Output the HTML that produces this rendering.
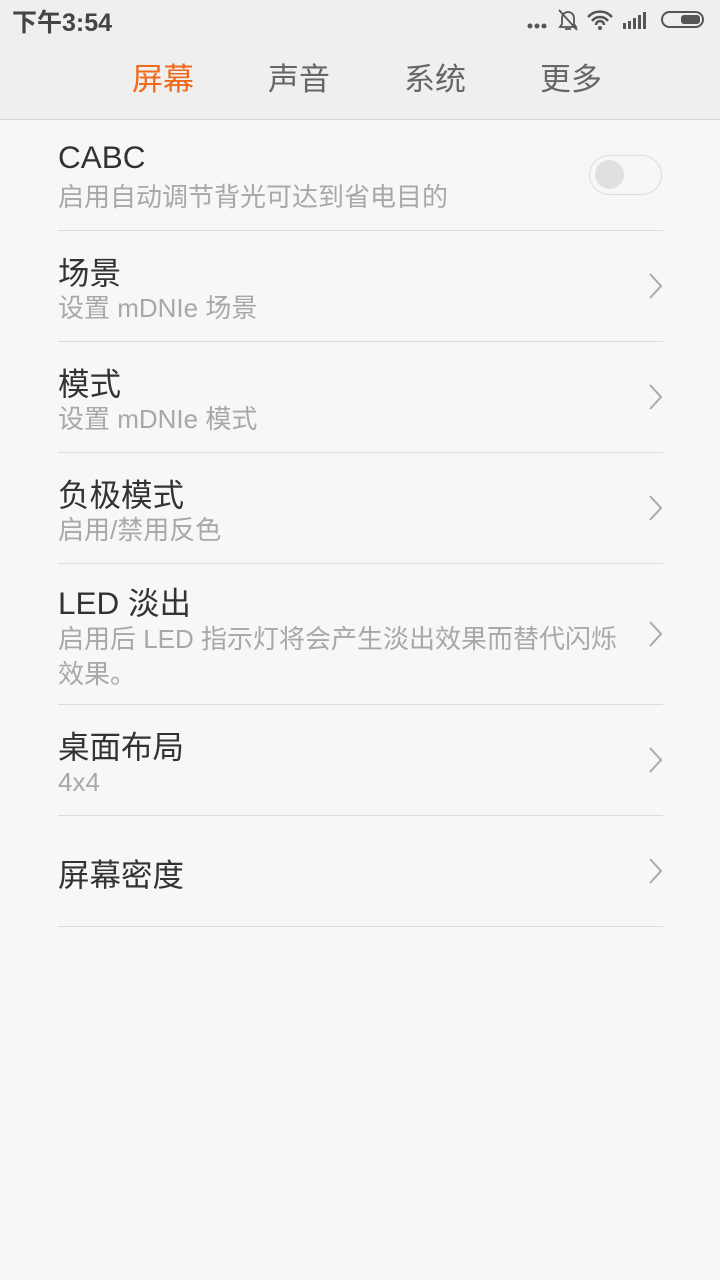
<!DOCTYPE html><html><head><meta charset="utf-8"><style>
body{margin:0;width:720px;height:1280px;background:#f7f7f7;font-family:"Liberation Sans","Noto Sans CJK SC",sans-serif;position:relative;overflow:hidden}
.hd{position:absolute;left:0;top:0;width:720px;height:119px;background:#efefef;border-bottom:1px solid #d6d6d6}
.t{position:absolute;white-space:nowrap}
.ti{font-size:31.5px;color:#333;left:58px}
.su{font-size:26px;color:#a8a8a8;left:58px;line-height:31px}
.ln{position:absolute;left:58px;width:605px;height:1px;background:#dcdcdc}
.tab{font-size:31px;color:#666;top:54px}
svg.ch{position:absolute;left:646px;width:20px;height:30px}
</style></head><body>
<div class="hd"></div>
<div class="t" style="left:12px;top:3px;font-size:25px;font-weight:bold;color:#444">下午3:54</div>
<svg style="position:absolute;left:526px;top:8px" width="180" height="26">
<circle cx="4" cy="18" r="2.5" fill="#555"/><circle cx="11" cy="18" r="2.5" fill="#555"/><circle cx="18" cy="18" r="2.5" fill="#555"/>
<path d="M36 16 V10 a6 6 0 0 1 12 0 V16 l2 3 H34 Z M39 21 h6 M33 2 L51 22" stroke="#555" stroke-width="1.8" fill="none"/>
<path d="M62 9 a16 16 0 0 1 24 0 M66 13 a10 10 0 0 1 16 0 M70 17 a4 4 0 0 1 8 0" stroke="#555" stroke-width="2.5" fill="none"/><circle cx="74" cy="20" r="2" fill="#555"/>
<rect x="97" y="15" width="3" height="6" fill="#555"/><rect x="102" y="13" width="3" height="8" fill="#555"/><rect x="107" y="10" width="3" height="11" fill="#555"/><rect x="112" y="7" width="3" height="14" fill="#555"/><rect x="117" y="4" width="3" height="17" fill="#555"/>
<rect x="136" y="4" width="41" height="15" rx="7.5" stroke="#555" stroke-width="2" fill="none"/><rect x="155" y="7" width="19" height="9" rx="3" fill="#555"/>
</svg>
<div class="t tab" style="left:132px;color:#f06a1c">屏幕</div>
<div class="t tab" style="left:268px">声音</div>
<div class="t tab" style="left:404px">系统</div>
<div class="t tab" style="left:540px">更多</div>

<div class="t ti" style="top:139px">CABC</div>
<div class="t su" style="top:182px">启用自动调节背光可达到省电目的</div>
<div style="position:absolute;left:589px;top:155px;width:73px;height:40px;border:1px solid #dcdcdc;border-radius:20px;box-sizing:border-box"></div>
<div style="position:absolute;left:595px;top:160px;width:29px;height:29px;border-radius:50%;background:#e0e0e0"></div>
<div class="ln" style="top:230px"></div>

<div class="t ti" style="top:248px">场景</div>
<div class="t su" style="top:293px">设置 mDNIe 场景</div>
<svg class="ch" style="top:271px"><path d="M4 3 L15 15 L4 27" stroke="#aaa" stroke-width="2" fill="none"/></svg>
<div class="ln" style="top:341px"></div>

<div class="t ti" style="top:359px">模式</div>
<div class="t su" style="top:404px">设置 mDNIe 模式</div>
<svg class="ch" style="top:382px"><path d="M4 3 L15 15 L4 27" stroke="#aaa" stroke-width="2" fill="none"/></svg>
<div class="ln" style="top:452px"></div>

<div class="t ti" style="top:470px">负极模式</div>
<div class="t su" style="top:515px">启用/禁用反色</div>
<svg class="ch" style="top:493px"><path d="M4 3 L15 15 L4 27" stroke="#aaa" stroke-width="2" fill="none"/></svg>
<div class="ln" style="top:563px"></div>

<div class="t ti" style="top:578px">LED 淡出</div>
<div class="t su" style="top:624px">启用后 LED 指示灯将会产生淡出效果而替代闪烁</div>
<div class="t su" style="top:659px">效果。</div>
<svg class="ch" style="top:619px"><path d="M4 3 L15 15 L4 27" stroke="#aaa" stroke-width="2" fill="none"/></svg>
<div class="ln" style="top:704px"></div>

<div class="t ti" style="top:722px">桌面布局</div>
<div class="t su" style="top:767px">4x4</div>
<svg class="ch" style="top:745px"><path d="M4 3 L15 15 L4 27" stroke="#aaa" stroke-width="2" fill="none"/></svg>
<div class="ln" style="top:815px"></div>

<div class="t ti" style="top:850px">屏幕密度</div>
<svg class="ch" style="top:856px"><path d="M4 3 L15 15 L4 27" stroke="#aaa" stroke-width="2" fill="none"/></svg>
<div class="ln" style="top:926px"></div>
</body></html>
